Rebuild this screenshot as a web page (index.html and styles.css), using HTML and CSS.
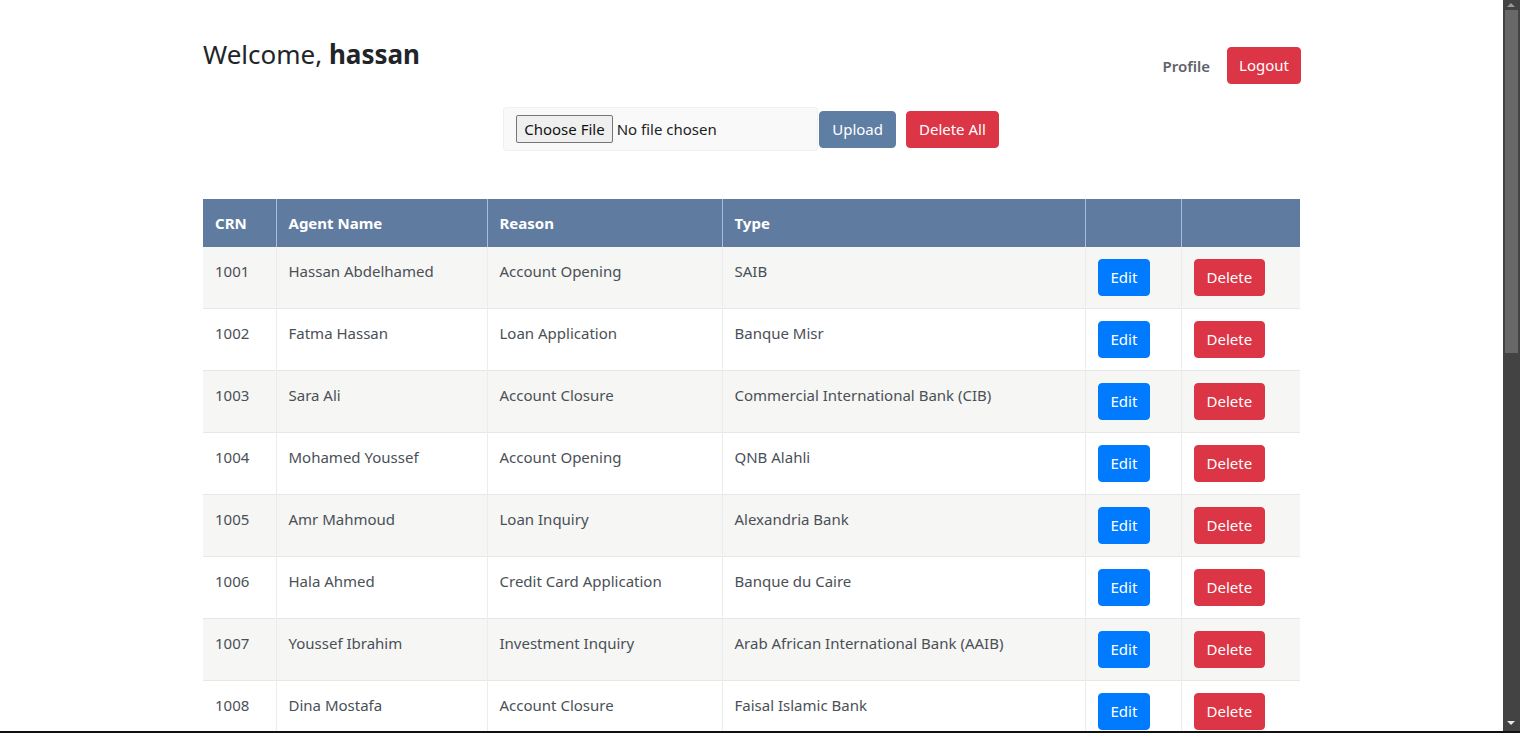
FILE: index.html
```html
<!DOCTYPE html>
<html lang="en">
<head>
<meta charset="utf-8">
<title>Dashboard</title>
<link rel="stylesheet" href="styles.css">
</head>
<body>
<div class="viewport">
  <div class="container">
    <div class="topbar">
      <h2 class="welcome">Welcome, <strong>hassan</strong></h2>
      <nav class="nav">
        <a class="nav-link" href="#">Profile</a>
        <button class="btn btn-danger btn-logout">Logout</button>
      </nav>
    </div>
    <form class="upload">
      <div class="file-box">
        <span class="file-btn">Choose File</span>
        <span class="file-name">No file chosen</span>
      </div>
      <button type="button" class="btn btn-steel">Upload</button>
      <button type="button" class="btn btn-danger btn-delall">Delete All</button>
    </form>
    <table class="data">
      <colgroup>
        <col class="c-crn"><col class="c-agent"><col class="c-reason"><col class="c-type"><col class="c-edit"><col class="c-del">
      </colgroup>
      <thead>
        <tr><th>CRN</th><th>Agent Name</th><th>Reason</th><th>Type</th><th></th><th></th></tr>
      </thead>
      <tbody>
        <tr><td>1001</td><td>Hassan Abdelhamed</td><td>Account Opening</td><td>SAIB</td><td><button class="btn btn-primary">Edit</button></td><td><button class="btn btn-danger">Delete</button></td></tr>
        <tr><td>1002</td><td>Fatma Hassan</td><td>Loan Application</td><td>Banque Misr</td><td><button class="btn btn-primary">Edit</button></td><td><button class="btn btn-danger">Delete</button></td></tr>
        <tr><td>1003</td><td>Sara Ali</td><td>Account Closure</td><td>Commercial International Bank (CIB)</td><td><button class="btn btn-primary">Edit</button></td><td><button class="btn btn-danger">Delete</button></td></tr>
        <tr><td>1004</td><td>Mohamed Youssef</td><td>Account Opening</td><td>QNB Alahli</td><td><button class="btn btn-primary">Edit</button></td><td><button class="btn btn-danger">Delete</button></td></tr>
        <tr><td>1005</td><td>Amr Mahmoud</td><td>Loan Inquiry</td><td>Alexandria Bank</td><td><button class="btn btn-primary">Edit</button></td><td><button class="btn btn-danger">Delete</button></td></tr>
        <tr><td>1006</td><td>Hala Ahmed</td><td>Credit Card Application</td><td>Banque du Caire</td><td><button class="btn btn-primary">Edit</button></td><td><button class="btn btn-danger">Delete</button></td></tr>
        <tr><td>1007</td><td>Youssef Ibrahim</td><td>Investment Inquiry</td><td>Arab African International Bank (AAIB)</td><td><button class="btn btn-primary">Edit</button></td><td><button class="btn btn-danger">Delete</button></td></tr>
        <tr><td>1008</td><td>Dina Mostafa</td><td>Account Closure</td><td>Faisal Islamic Bank</td><td><button class="btn btn-primary">Edit</button></td><td><button class="btn btn-danger">Delete</button></td></tr>
      </tbody>
    </table>
  </div>
</div>
<div class="scrollbar">
  <span class="arrow arrow-up"></span>
  <span class="thumb"></span>
  <span class="arrow arrow-down"></span>
</div>
<div class="frame-bottom"></div>
</body>
</html>
```
FILE: styles.css
```css
html, body {
  margin: 0;
  padding: 0;
  height: 100%;
  overflow: hidden;
  background: #fff;
}
body {
  font-family: "Noto Sans", "Open Sans", sans-serif;
  font-size: 15px;
  color: #495057;
}
.viewport {
  width: calc(100% - 17px);
}
.container {
  width: 1097px;
  margin: 0 auto;
  padding-top: 36px;
}
.topbar {
  display: flex;
  justify-content: space-between;
  align-items: flex-start;
}
.welcome {
  margin: 0;
  font-size: 26px;
  font-weight: 400;
  line-height: 36px;
  color: #212529;
}
.welcome strong {
  font-weight: 700;
}
.nav {
  display: flex;
  align-items: center;
  gap: 17px;
  margin-top: 11px;
}
.nav-link {
  color: #5f6368;
  font-weight: 600;
  text-decoration: none;
  font-size: 15px;
}
.btn {
  font-family: inherit;
  font-size: 15px;
  line-height: 23px;
  border: 1px solid transparent;
  border-radius: 4px;
  padding: 6px 12px;
  color: #fff;
  cursor: pointer;
  display: inline-block;
}
.btn-danger { background: #dc3545; border-color: #dc3545; }
.btn-primary { background: #007bff; border-color: #007bff; }
.btn-steel { background: #5f7ea3; border-color: #5f7ea3; }
.btn-logout { padding: 6px 11px; margin-right: -1px; }
.upload {
  display: flex;
  justify-content: center;
  align-items: center;
  margin-top: 24px;
}
.file-box {
  width: 313px;
  height: 42px;
  box-sizing: border-box;
  background: #f9f9f9;
  border-radius: 3px;
  box-shadow: 0 0 0 1px #f0f0f0;
  display: flex;
  align-items: center;
  padding-left: 12px;
  color: #212529;
}
.file-btn {
  box-sizing: border-box;
  height: 28px;
  padding: 0 7px;
  line-height: 26px;
  background: #efefef;
  border: 1px solid #767676;
  border-radius: 2px;
  color: #111;
  font-size: 15px;
}
.file-name {
  margin-left: 4px;
  font-size: 15px;
  color: #222;
}
.upload .btn-steel { margin-left: 2px; }
.upload .btn-delall { margin-left: 10px; }
.data {
  width: 100%;
  margin-top: 49px;
  border-collapse: collapse;
  table-layout: fixed;
}
.c-crn { width: 73px; }
.c-agent { width: 211px; }
.c-reason { width: 235px; }
.c-type { width: 363px; }
.c-edit { width: 96px; }
.c-del { width: 119px; }
.data th, .data td {
  padding: 12px;
  text-align: left;
  vertical-align: top;
  line-height: 24px;
}
.data th {
  background: #5f7ca0;
  color: #fff;
  font-weight: 700;
  border-left: 1px solid #a9bedb;
}
.data th:first-child { border-left: none; }
.data td {
  border-top: 1px solid #e8e8e8;
  border-left: 1px solid #ececec;
}
.data tbody tr:first-child td { border-top: none; }
.data td:first-child { border-left: none; }
.data tbody tr:nth-child(odd) td { background: #f6f6f4; }
.data td .btn { vertical-align: top; }
.scrollbar {
  position: fixed;
  top: 0;
  right: 0;
  bottom: 0;
  width: 17px;
  background: #434343;
}
.thumb {
  position: absolute;
  left: 2px;
  right: 2px;
  top: 10px;
  height: 343px;
  background: #686868;
}
.arrow {
  position: absolute;
  left: 4px;
  width: 0;
  height: 0;
  border-left: 4px solid transparent;
  border-right: 4px solid transparent;
}
.arrow-up { top: 3px; border-bottom: 4px solid #9a9a9a; }
.arrow-down { bottom: 8px; border-top: 4px solid #e8e8e8; }
.frame-bottom {
  position: fixed;
  left: 0;
  right: 0;
  bottom: 0;
  height: 2px;
  background: #111;
}
```
